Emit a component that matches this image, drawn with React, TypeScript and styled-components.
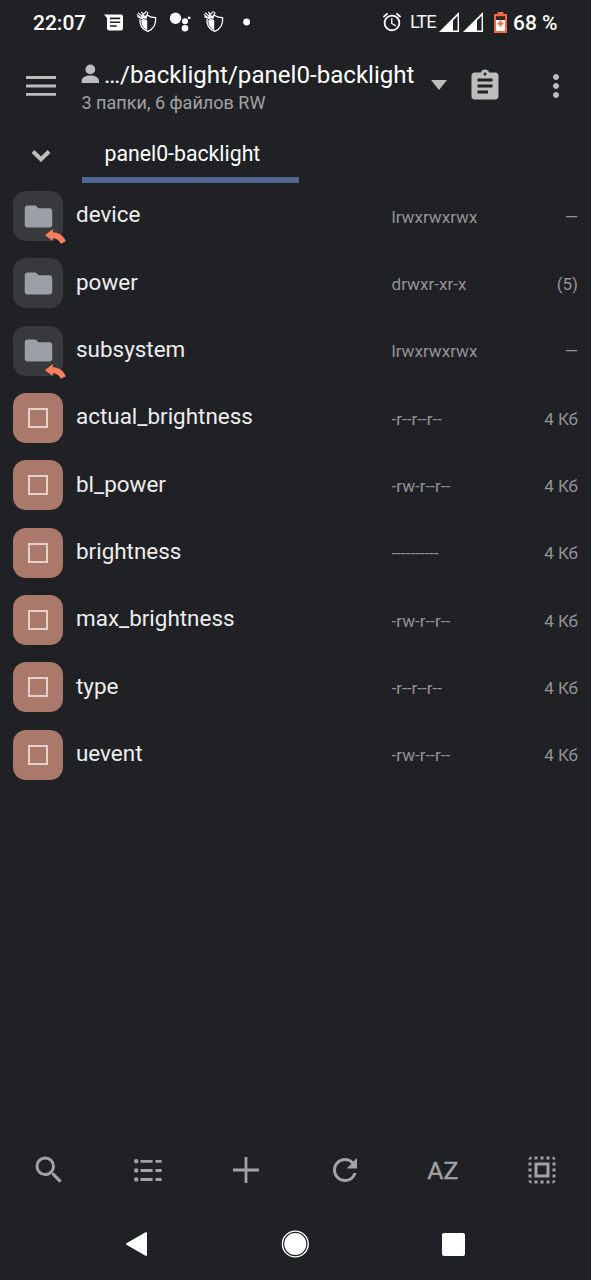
import React from "react";
import styled, { createGlobalStyle } from "styled-components";
import { MdAlarm, MdAssignment, MdFolder, MdMoreVert, MdRefresh, MdSearch, MdSelectAll } from "react-icons/md";

const GlobalStyle = createGlobalStyle`
  html, body { margin: 0; background: #202125; }
  * { box-sizing: border-box; }
  svg { display: block; flex: none; }
`;

const Screen = styled.div`
  width: 591px;
  height: 1280px;
  display: flex;
  flex-direction: column;
  overflow: hidden;
  background: #202125;
  color: #fff;
  font-family: Roboto, "Noto Sans", sans-serif;
`;

const StatusBar = styled.div`
  height: 45px;
  display: flex;
  justify-content: space-between;
  padding: 0 33px;
  flex: none;
`;

const StatusGroup = styled.div`
  display: flex;
  align-items: center;
  height: 44px;
`;

const Clock = styled.span`
  width: 71px;
  font-size: 21px;
  font-weight: 500;
  line-height: 44px;
  padding-top: 1px;
`;

const Network = styled.span`
  font-size: 18.4px;
  line-height: 44px;
  width: 29px;
  margin-left: 7px;
  letter-spacing: -1.1px;
  color: #f0f0f0;
`;

const Percent = styled.span`
  width: 45px;
  font-size: 21px;
  font-weight: 500;
  line-height: 44px;
  margin-left: 6px;
  padding-top: 1px;
  white-space: nowrap;
`;

const Gap = styled.i<{ $w: number }>`
  width: ${(p) => p.$w}px;
  flex: none;
`;

const Header = styled.header`
  height: 85px;
  flex: none;
  display: flex;
  align-items: flex-start;
  color: #bdbdbe;
`;

const MenuButton = styled.div`
  width: 81px;
  padding: 31px 0 0 26px;
`;

const PathBlock = styled.div`
  width: 350px;
  padding-top: 15px;
`;

const PathLine = styled.div`
  display: flex;
  height: 31px;
`;

const PersonSlot = styled.div`
  width: 23px;
  padding-top: 4px;
`;

const PathText = styled.span`
  font-size: 24.1px;
  line-height: 30px;
  color: #fff;
  white-space: nowrap;
`;

const Summary = styled.div`
  font-size: 18.05px;
  line-height: 24px;
  padding-left: 0.5px;
  color: #a0a1a3;
  white-space: nowrap;
`;

const HeaderIcon = styled.div<{ $w: number; $top: number }>`
  width: ${(p) => p.$w}px;
  padding-top: ${(p) => p.$top}px;
`;

const TabBar = styled.div`
  height: 53px;
  display: flex;
  flex: none;
`;

const Expand = styled.div`
  width: 81.5px;
  padding: 20px 0 0 31px;
`;

const Tab = styled.div`
  width: 217.5px;
  height: 53px;
  padding: 8px 0 0 23px;
  border-bottom: 6px solid #50678f;
  font-size: 21.25px;
  line-height: 32px;
  white-space: nowrap;
`;

const List = styled.main`
  flex: 1;
  padding-top: 8px;
`;

const Row = styled.div`
  height: 67.35px;
  display: flex;
  padding: 0 13px;
`;

const Tile = styled.div<{ $folder: boolean }>`
  position: relative;
  width: 50px;
  height: 50px;
  flex: none;
  display: flex;
  align-items: center;
  justify-content: center;
  border-radius: 13px;
  color: #9ba0a6;
  background: ${(p) => (p.$folder ? "#38393c" : "#ab786c")};
`;

const FileMark = styled.div`
  width: 20px;
  height: 20px;
  border: 2px solid #e5cfca;
`;

const LinkBadge = styled.div`
  position: absolute;
  left: 32px;
  top: 38px;
`;

const Name = styled.div`
  width: 328.5px;
  padding: 8.3px 0 0 13px;
  font-size: 22.45px;
  line-height: 30px;
  color: #ededee;
`;

const Mode = styled.div`
  flex: 1;
  padding-top: 14.6px;
  font-size: 17.1px;
  line-height: 22px;
  color: #929395;
`;

const Size = styled(Mode)`
  flex: none;
  font-size: 17px;
  text-align: right;
`;

const Toolbar = styled.nav`
  height: 76px;
  flex: none;
  display: grid;
  grid-template-columns: repeat(6, 1fr);
  place-items: center;
  color: #a2a2a5;
`;

const SortLabel = styled.span`
  font-size: 24.8px;
  line-height: 30px;
  padding-top: 1px;
  margin-right: 1px;
  -webkit-text-stroke: 0.4px #a2a2a5;
`;

const NavBar = styled.div`
  height: 72px;
  flex: none;
  display: flex;
  align-items: center;
  justify-content: space-between;
  padding: 0 126px 0 125px;
`;

const Shield = () => (
  <svg width="22" height="22" viewBox="0 0 22 22" fill="none" stroke="#fff">
    <path d="M5 6.2 C7 6.4 9.4 5.8 11.4 4.2 C13.6 5.8 16.6 6.6 19.6 6.6 C20.2 13 17.4 18 11.8 20.4 C6 18 3.4 13.4 4 8" strokeWidth="1.3" />
    <path d="M5.4 9 L11.2 9.4 V19 C7 17 5 13.4 5.4 9Z" fill="#fff" stroke="none" />
    <path d="M0.8 3.4 L7.2 8.4 L11.2 10.4 M2 1.6 L8.6 7.2 M5.4 0.8 L9.8 7.6 L12 1 M10.6 0.4 L6 4.6 M1.4 5.6 L5.8 7.4" strokeWidth="1.2" />
  </svg>
);

const Signal = () => (
  <svg width="20" height="20" viewBox="0 0 20 20">
    <path d="M0 20 L20 0 V20Z M14 8.4 V18.4 H18.6 V3.8Z" fill="#fff" fillRule="evenodd" />
  </svg>
);

const files = [
  { name: "device", mode: "lrwxrwxrwx", size: "—", folder: true, link: true },
  { name: "power", mode: "drwxr-xr-x", size: "(5)", folder: true },
  { name: "subsystem", mode: "lrwxrwxrwx", size: "—", folder: true, link: true },
  { name: "actual_brightness", mode: "-r--r--r--", size: "4 Кб" },
  { name: "bl_power", mode: "-rw-r--r--", size: "4 Кб" },
  { name: "brightness", mode: "----------", size: "4 Кб" },
  { name: "max_brightness", mode: "-rw-r--r--", size: "4 Кб" },
  { name: "type", mode: "-r--r--r--", size: "4 Кб" },
  { name: "uevent", mode: "-rw-r--r--", size: "4 Кб" },
];

export default function App() {
  return (
    <>
      <GlobalStyle />
      <Screen>
        <StatusBar>
          <StatusGroup>
            <Clock>22:07</Clock>
            <svg width="20" height="17" viewBox="0 0 20 17">
              <path d="M0 0.5 H17 Q19 0.5 19 2.5 V14.5 Q19 16.5 17 16.5 H5 Q3 16.5 3 14.5 V4Z M6 3.6 V5.2 H16.2 V3.6Z M6 7.4 V9 H16.2 V7.4Z M6 11.2 V12.8 H12.8 V11.2Z" fill="#fff" fillRule="evenodd" />
            </svg>
            <Gap $w={12} />
            <Shield />
            <Gap $w={12} />
            <svg width="22" height="20" viewBox="0 0 22 20" fill="#fff">
              <circle cx="5.5" cy="6.3" r="5.7" />
              <circle cx="15" cy="9.3" r="3" />
              <circle cx="19.2" cy="5.8" r="1.4" />
              <circle cx="15" cy="16.2" r="3.3" />
            </svg>
            <Gap $w={11} />
            <Shield />
            <Gap $w={18} />
            <svg width="8" height="8" viewBox="0 0 8 8"><circle cx="3.6" cy="4" r="3.4" fill="#fff" /></svg>
          </StatusGroup>
          <StatusGroup>
            <MdAlarm size={22} />
            <Network>LTE</Network>
            <Signal />
            <Gap $w={4} />
            <Signal />
            <Gap $w={11} />
            <svg width="13" height="21" viewBox="0 0 13 21">
              <path d="M3.5 0 H9.5 V2 H13 V21 H0 V2 H3.5Z" fill="#ee6a45" />
              <path d="M2 4.2 H11 V8 H2Z" fill="#39221e" />
              <path d="M2 8 H11 V19 H2Z" fill="#fff" />
              <path d="M6.5 8.6 V14.6 M3.5 11.6 H9.5" stroke="#ee6a45" strokeWidth="2" />
            </svg>
            <Percent>68 %</Percent>
          </StatusGroup>
        </StatusBar>

        <Header>
          <MenuButton>
            <svg width="30" height="20" viewBox="0 0 30 20">
              <path d="M0 1.5 H30 M0 10 H30 M0 18.3 H30" stroke="#bdbdbe" strokeWidth="2.8" />
            </svg>
          </MenuButton>
          <PathBlock>
            <PathLine>
              <PersonSlot>
                <svg width="19" height="20" viewBox="0 0 19 20" fill="#bdbdbe">
                  <circle cx="9.3" cy="5.4" r="4.9" />
                  <path d="M0.6 19 V17 C0.6 13.5 4.5 11.6 9.3 11.6 C14 11.6 18 13.5 18 17 V19Z" />
                </svg>
              </PersonSlot>
              <PathText>…/backlight/panel0-backlight</PathText>
            </PathLine>
            <Summary>3 папки, 6 файлов RW</Summary>
          </PathBlock>
          <HeaderIcon $w={36} $top={35}>
            <svg width="16" height="10" viewBox="0 0 16 10"><path d="M0 0 H16 L8 10Z" fill="#bdbdbe" /></svg>
          </HeaderIcon>
          <HeaderIcon $w={71} $top={22.5}><MdAssignment size={36} /></HeaderIcon>
          <HeaderIcon $w={36} $top={23}><MdMoreVert size={36} /></HeaderIcon>
        </Header>

        <TabBar>
          <Expand>
            <svg width="20" height="12" viewBox="0 0 20 12"><path d="M2 1.5 L10 9.3 L18 1.5" fill="none" stroke="#bdbdbe" strokeWidth="4" /></svg>
          </Expand>
          <Tab>panel0-backlight</Tab>
        </TabBar>

        <List>
          {files.map((f) => (
            <Row key={f.name}>
              <Tile $folder={!!f.folder}>
                {f.folder ? <MdFolder size={33} /> : <FileMark />}
                {f.link && (
                  <LinkBadge>
                    <svg width="21" height="15" viewBox="0 0 21 15">
                      <path d="M0 6.3 L7.8 0 V3.2 C14 3.3 18.5 6.5 20.8 12.2 L16 14.8 C14.2 11.3 11.5 9.3 7.8 8.9 V12Z" fill="#fb7f5f" />
                    </svg>
                  </LinkBadge>
                )}
              </Tile>
              <Name>{f.name}</Name>
              <Mode>{f.mode}</Mode>
              <Size>{f.size}</Size>
            </Row>
          ))}
        </List>

        <Toolbar>
          <MdSearch size={36} />
          <svg width="28" height="23" viewBox="0 0 28 23">
            {[2.3, 11.5, 20.5].map((y) => (
              <g key={y}>
                <circle cx="2.2" cy={y} r="2.2" fill="#a2a2a5" />
                <path d={`M6.5 ${y} H18.6 M21.5 ${y} H27.6`} stroke="#a2a2a5" strokeWidth="2.8" />
              </g>
            ))}
          </svg>
          <svg width="26" height="26" viewBox="0 0 26 26"><path d="M13 0 V26 M0 13 H26" stroke="#a2a2a5" strokeWidth="2.8" /></svg>
          <MdRefresh size={36} />
          <SortLabel>AZ</SortLabel>
          <MdSelectAll size={36} />
        </Toolbar>

        <NavBar>
          <svg width="22" height="26" viewBox="0 0 22 26"><path d="M2 13 L21 2 V24Z" fill="#fff" stroke="#fff" strokeWidth="2" strokeLinejoin="round" /></svg>
          <svg width="28" height="28" viewBox="0 0 28 28" fill="#fff">
            <circle cx="14.3" cy="14" r="12.9" fill="none" stroke="#fff" strokeWidth="1.4" />
            <circle cx="14.3" cy="14" r="11" />
          </svg>
          <svg width="23" height="23" viewBox="0 0 23 23"><rect width="23" height="23" rx="2" fill="#fff" /></svg>
        </NavBar>
      </Screen>
    </>
  );
}
